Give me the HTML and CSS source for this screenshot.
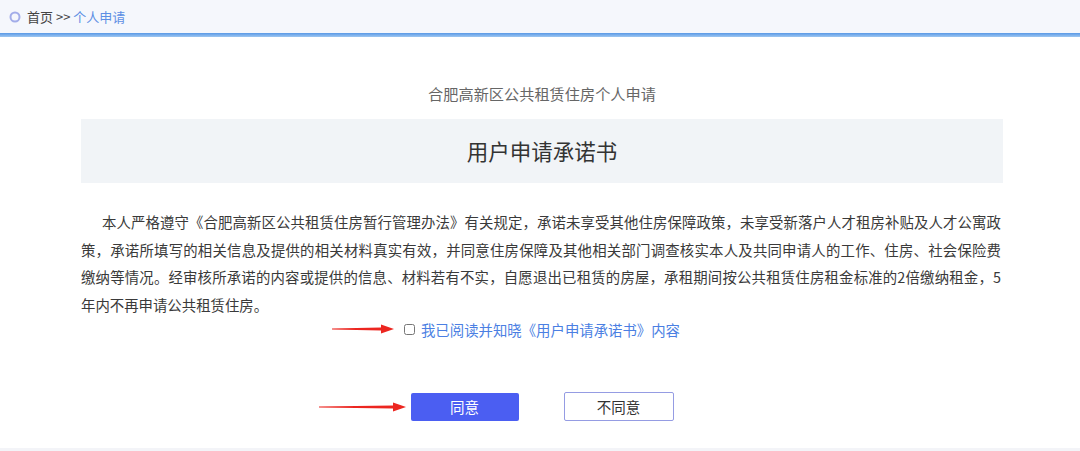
FILE: index.html
```html
<!DOCTYPE html>
<html lang="zh-CN">
<head>
    <meta charset="UTF-8">
    <meta name="viewport" content="width=device-width, initial-scale=1.0">
    <title>用户申请承诺书</title>
    <link rel="stylesheet" href="styles.css">
</head>
<body>
    <div class="topbar">
        <!-- breadcrumb -->
        <svg class="crumb-icon" width="12" height="12" viewBox="0 0 12 12">
            <circle cx="6" cy="6" r="4.5" fill="none" stroke="#a3ade9" stroke-width="2"/>
        </svg>
        <span class="crumb">首页 &gt;&gt; </span>
        <span class="crumb current">个人申请</span>
    </div>
    <div class="topline"></div>

    <div class="main">
        <div class="subtitle">合肥高新区公共租赁住房个人申请</div>
        <div class="title-box">用户申请承诺书</div>

        <p class="promise">本人严格遵守《合肥高新区公共租赁住房暂行管理办法》有关规定，承诺未享受其他住房保障政策，未享受新落户人才租房补贴及人才公寓政策，承诺所填写的相关信息及提供的相关材料真实有效，并同意住房保障及其他相关部门调查核实本人及共同申请人的工作、住房、社会保险费缴纳等情况。经审核所承诺的内容或提供的信息、材料若有不实，自愿退出已租赁的房屋，承租期间按公共租赁住房租金标准的2倍缴纳租金，5年内不再申请公共租赁住房。</p>

        <div class="agree-row">
            <label class="agree">
                <svg class="arrow arrow-short" width="62" height="10" viewBox="0 0 62 10">
                    <polygon points="0,4.6 49,3.4 49,0.6 62,5 49,9.4 49,6.6 0,5.4" fill="#ec2620"/>
                </svg>
                <input type="checkbox" id="agreeBox">
                <span class="agree-text">我已阅读并知晓《用户申请承诺书》内容</span>
            </label>
        </div>

        <div class="btn-row">
            <div class="btn-wrap">
                <svg class="arrow arrow-long" width="87" height="10" viewBox="0 0 87 10">
                    <polygon points="0,4.6 74,3.4 74,0.6 87,5 74,9.4 74,6.6 0,5.4" fill="#ec2620"/>
                </svg>
                <button class="btn btn-ok">同意</button>
            </div>
            <button class="btn btn-no">不同意</button>
        </div>
    </div>

    <div class="footer"></div>
</body>
</html>
```

FILE: styles.css
```css
body {
    margin: 0;
    padding: 0;
    font-family: "Noto Sans CJK SC", "Noto Sans", sans-serif;
    color: #333;
    background-color: #fff;
}

.topbar {
    height: 33px;
    display: flex;
    align-items: center;
    padding-left: 9px;
    background-color: #f5f7fc;
    font-size: 13px;
}

.crumb-icon {
    margin-right: 6px;
}

.crumb {
    color: #444;
    white-space: pre;
}

.crumb.current {
    color: #5d8fe4;
}

.topline {
    height: 4px;
    background: linear-gradient(#5898e6, #9ec7f1);
}

.main {
    width: 922px;
    margin-left: 81px;
    padding-top: 46px;
}

.subtitle {
    text-align: center;
    font-size: 15.2px;
    line-height: 20px;
    color: #666;
}

.title-box {
    margin-top: 16px;
    height: 64px;
    line-height: 64px;
    text-align: center;
    font-size: 21.5px;
    color: #333;
    background-color: #f1f4f7;
}

.promise {
    width: 920px;
    margin: 25px 0 0;
    font-size: 14.4px;
    line-height: 27.5px;
    text-indent: 21px;
    text-align: justify;
    color: #3a3a3a;
}

.agree-row {
    display: flex;
    justify-content: center;
    height: 22px;
}

.agree {
    position: relative;
    display: flex;
    align-items: center;
    font-size: 14.4px;
    cursor: pointer;
}

.agree input {
    width: 11px;
    height: 11px;
    margin: 0 6px 0 0;
}

.agree-text {
    color: #4b7fe3;
}

.arrow {
    position: absolute;
    top: 50%;
    transform: translateY(-50%);
}

.arrow-short {
    right: calc(100% + 10px);
}

.arrow-long {
    right: calc(100% + 5px);
}

.btn-row {
    display: flex;
    justify-content: center;
    align-items: center;
    gap: 45px;
    margin-top: 52px;
    margin-bottom: 27px;
}

.btn-wrap {
    position: relative;
}

.btn {
    width: 108px;
    height: 28px;
    font-family: inherit;
    font-size: 14.5px;
    border-radius: 2px;
    cursor: pointer;
    outline: none;
}

.btn-ok {
    display: block;
    border: none;
    background-color: #4b5ef2;
    color: #fff;
}

.btn-no {
    width: 110px;
    height: 29px;
    border: 1px solid #959ce3;
    background-color: #fff;
    color: #333;
}

.footer {
    height: 10px;
    background-color: #f3f4f8;
}
```
